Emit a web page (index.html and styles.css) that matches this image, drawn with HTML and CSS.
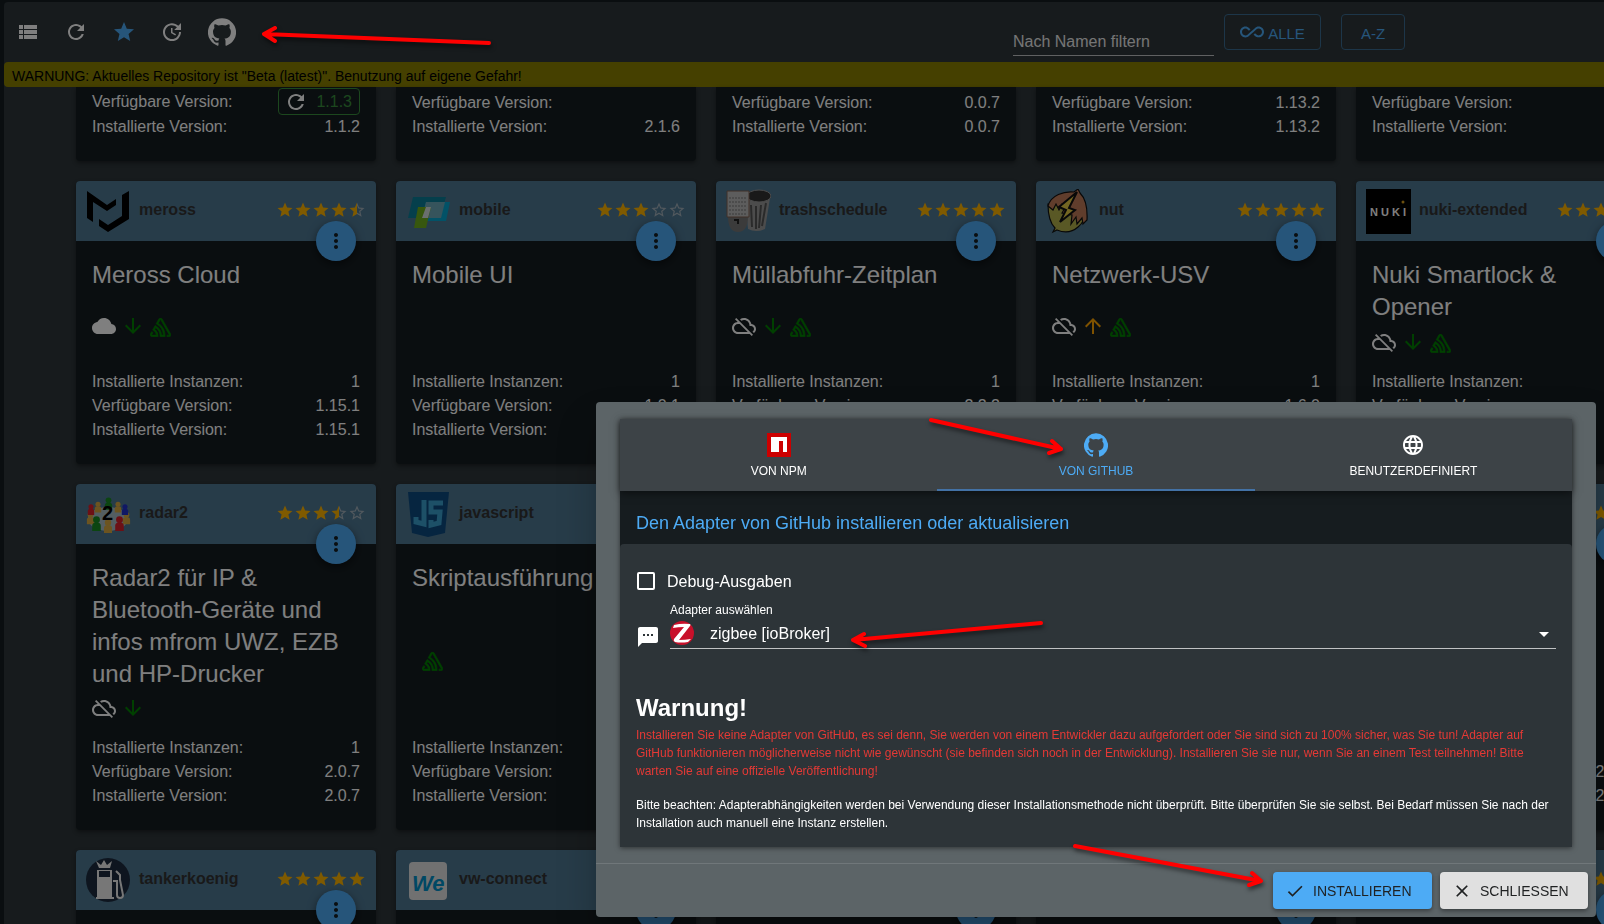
FILE: index.html
```html
<!DOCTYPE html>
<html lang="de">
<head>
    <meta charset="UTF-8">
    <meta name="viewport" content="width=device-width, initial-scale=1.0">
    <title>Adapter</title>
    <link rel="stylesheet" href="styles.css">
</head>
<body>
    <!-- Icon sprite -->
    <svg class="sprite" aria-hidden="true">
        <symbol id="list" viewBox="0 0 24 24"><path d="M3 14h4v-4H3v4zm0 5h4v-4H3v4zM3 9h4V5H3v4zm5 5h13v-4H8v4zm0 5h13v-4H8v4zM8 5v4h13V5H8z"/></symbol>
        <symbol id="refresh" viewBox="0 0 24 24"><path d="M17.65 6.35C16.2 4.9 14.21 4 12 4c-4.42 0-7.99 3.58-7.99 8s3.57 8 7.99 8c3.73 0 6.84-2.55 7.73-6h-2.08c-.82 2.33-3.04 4-5.65 4-3.31 0-6-2.69-6-6s2.69-6 6-6c1.66 0 3.14.69 4.22 1.78L13 11h7V4l-2.35 2.35z"/></symbol>
        <symbol id="star" viewBox="0 0 24 24"><path d="M12 17.27L18.18 21l-1.64-7.03L22 9.24l-7.19-.61L12 2 9.19 8.63 2 9.24l5.46 4.73L5.82 21z"/></symbol>
        <symbol id="star-half" viewBox="0 0 24 24"><path fill="#a3b1bb" d="M22 9.24l-7.19-.62L12 2v15.27L18.18 21l-1.63-7.03L22 9.24zM12 15.4V6.1l1.71 4.04 4.38.38-3.32 2.88 1 4.28L12 15.4z"/><path d="M12 2L9.19 8.63 2 9.24l5.46 4.73L5.82 21 12 17.27z"/></symbol>
        <symbol id="star-empty" viewBox="0 0 24 24"><path fill="#a3b1bb" d="M22 9.24l-7.19-.62L12 2 9.19 8.63 2 9.24l5.46 4.73L5.82 21 12 17.27 18.18 21l-1.63-7.03L22 9.24zM12 15.4l-3.76 2.27 1-4.28-3.32-2.88 4.38-.38L12 6.1l1.71 4.04 4.38.38-3.32 2.88 1 4.28L12 15.4z"/></symbol>
        <symbol id="update" viewBox="0 0 24 24"><path d="M21 10.12h-6.78l2.74-2.82c-2.73-2.7-7.15-2.8-9.88-.1-2.73 2.71-2.73 7.08 0 9.79s7.15 2.71 9.88 0C18.32 15.65 19 14.08 19 12.1h2c0 1.98-.88 4.55-2.64 6.29-3.51 3.48-9.21 3.48-12.72 0-3.5-3.47-3.53-9.11-.02-12.58s9.14-3.47 12.65 0L21 3v7.12zM12.5 8v4.25l3.5 2.08-.72 1.21L11 13V8h1.5z"/></symbol>
        <symbol id="github" viewBox="0 0 24 24"><path d="M12 .3a12 12 0 0 0-3.8 23.4c.6.1.8-.3.8-.6v-2c-3.3.7-4-1.6-4-1.6-.6-1.4-1.4-1.8-1.4-1.8-1-.7.1-.7.1-.7 1.2 0 1.9 1.2 1.9 1.2 1 1.8 2.8 1.3 3.5 1 0-.8.4-1.3.7-1.6-2.7-.3-5.5-1.3-5.5-6 0-1.2.5-2.3 1.3-3.1-.2-.4-.6-1.6 0-3.2 0 0 1-.3 3.4 1.2a11.5 11.5 0 0 1 6 0c2.3-1.5 3.3-1.2 3.3-1.2.6 1.6.2 2.8 0 3.2.9.8 1.3 1.9 1.3 3.2 0 4.6-2.8 5.6-5.5 5.9.5.4.9 1 .9 2.2v3.3c0 .3.1.7.8.6A12 12 0 0 0 12 .3"/></symbol>
        <symbol id="infinity" viewBox="0 0 24 24"><path d="M18.6 6.62c-1.44 0-2.8.56-3.77 1.53L12 10.66 10.48 12h.01L7.8 14.39c-.64.64-1.49.99-2.4.99-1.87 0-3.39-1.51-3.39-3.38S3.53 8.62 5.4 8.62c.91 0 1.76.35 2.44 1.03l1.13 1 1.51-1.34L9.22 8.2C8.2 7.18 6.84 6.62 5.4 6.62 2.42 6.62 0 9.04 0 12s2.42 5.38 5.4 5.38c1.44 0 2.8-.56 3.77-1.53l2.83-2.5.01.01L13.52 12h-.01l2.69-2.39c.64-.64 1.49-.99 2.4-.99 1.87 0 3.39 1.51 3.39 3.38s-1.52 3.38-3.39 3.38c-.9 0-1.76-.35-2.44-1.03l-1.14-1.01-1.51 1.34 1.27 1.12c1.02 1.01 2.37 1.57 3.82 1.57 2.98 0 5.4-2.41 5.4-5.38s-2.42-5.37-5.4-5.37z"/></symbol>
        <symbol id="more" viewBox="0 0 24 24"><path d="M12 8c1.1 0 2-.9 2-2s-.9-2-2-2-2 .9-2 2 .9 2 2 2zm0 2c-1.1 0-2 .9-2 2s.9 2 2 2 2-.9 2-2-.9-2-2-2zm0 6c-1.1 0-2 .9-2 2s.9 2 2 2 2-.9 2-2-.9-2-2-2z"/></symbol>
        <symbol id="cloud" viewBox="0 0 24 24"><path d="M19.35 10.04C18.67 6.59 15.64 4 12 4 9.11 4 6.6 5.64 5.35 8.04 2.34 8.36 0 10.91 0 14c0 3.31 2.69 6 6 6h13c2.76 0 5-2.24 5-5 0-2.64-2.05-4.78-4.65-4.96z"/></symbol>
        <symbol id="cloud-off" viewBox="0 0 24 24"><path d="M19.35 10.04C18.67 6.59 15.64 4 12 4c-1.48 0-2.85.43-4.01 1.17l1.46 1.46C10.21 6.23 11.08 6 12 6c3.04 0 5.5 2.46 5.5 5.5v.5H19c1.66 0 3 1.34 3 3 0 1.13-.64 2.11-1.56 2.62l1.45 1.45C23.16 18.16 24 16.68 24 15c0-2.64-2.05-4.78-4.65-4.96zM3 5.27l2.75 2.74C2.56 8.15 0 10.77 0 14c0 3.31 2.69 6 6 6h11.73l2 2L21 20.73 4.27 4 3 5.27zM7.73 10l8 8H6c-2.21 0-4-1.79-4-4s1.79-4 4-4h1.73z"/></symbol>
        <symbol id="down" viewBox="0 0 24 24"><path d="M20 12l-1.41-1.41L13 16.17V4h-2v12.17l-5.58-5.59L4 12l8 8 8-8z"/></symbol>
        <symbol id="up" viewBox="0 0 24 24"><path d="M4 12l1.41 1.41L11 7.83V20h2V7.83l5.58 5.59L20 12l-8-8-8 8z"/></symbol>
        <symbol id="sentry" viewBox="0 0 72 66"><path stroke="#008000" stroke-width="1.500" d="M29 2.26a4.67 4.67 0 0 0-8 0L14.42 13.53A32.21 32.21 0 0 1 32.17 40.19H27.55A27.68 27.68 0 0 0 12.09 17.47L6 28a15.92 15.92 0 0 1 9.23 12.17H4.62A.76.76 0 0 1 4 39.06l2.94-5a10.74 10.74 0 0 0-3.36-1.9l-2.91 5a4.54 4.54 0 0 0 1.69 6.24A4.66 4.66 0 0 0 4.62 44H19.15a19.4 19.4 0 0 0-8-17.31l2.31-4A23.87 23.87 0 0 1 23.76 44H36.07a35.88 35.88 0 0 0-16.41-31.8l4.67-8a.77.77 0 0 1 1.05-.27c.53.29 20.29 34.77 20.66 35.17a.76.76 0 0 1-.68 1.13H40.6q.09 1.91 0 3.81h4.78A4.59 4.59 0 0 0 50 39.43a4.49 4.49 0 0 0-.62-2.28Z" transform="scale(1.44 1.48)"/></symbol>
        <symbol id="globe" viewBox="0 0 24 24"><path d="M11.99 2C6.47 2 2 6.48 2 12s4.47 10 9.99 10C17.52 22 22 17.52 22 12S17.52 2 11.99 2zm6.93 6h-2.95c-.32-1.25-.78-2.45-1.38-3.56 1.84.63 3.37 1.91 4.33 3.56zM12 4.04c.83 1.2 1.48 2.53 1.91 3.96h-3.82c.43-1.43 1.08-2.76 1.91-3.96zM4.26 14C4.1 13.36 4 12.69 4 12s.1-1.36.26-2h3.38c-.08.66-.14 1.32-.14 2s.06 1.34.14 2H4.26zm.82 2h2.95c.32 1.25.78 2.45 1.38 3.56-1.84-.63-3.37-1.9-4.33-3.56zm2.95-8H5.08c.96-1.66 2.49-2.93 4.33-3.56C8.81 5.55 8.35 6.75 8.03 8zM12 19.96c-.83-1.2-1.48-2.53-1.91-3.96h3.82c-.43 1.43-1.08 2.76-1.91 3.96zM14.34 14H9.66c-.09-.66-.16-1.32-.16-2s.07-1.35.16-2h4.68c.09.65.16 1.32.16 2s-.07 1.34-.16 2zm.25 5.56c.6-1.11 1.06-2.31 1.38-3.56h2.95c-.96 1.65-2.49 2.93-4.33 3.56zM16.36 14c.08-.66.14-1.32.14-2s-.06-1.34-.14-2h3.38c.16.64.26 1.31.26 2s-.1 1.36-.26 2h-3.38z"/></symbol>
        <symbol id="sms" viewBox="0 0 24 24"><path d="M20 2H4c-1.1 0-1.99.9-1.99 2L2 22l4-4h14c1.1 0 2-.9 2-2V4c0-1.1-.9-2-2-2zM9 11H7V9h2v2zm4 0h-2V9h2v2zm4 0h-2V9h2v2z"/></symbol>
        <symbol id="check" viewBox="0 0 24 24"><path d="M9 16.17L4.83 12l-1.42 1.41L9 19 21 7l-1.41-1.41z"/></symbol>
        <symbol id="close" viewBox="0 0 24 24"><path d="M19 6.41L17.59 5 12 10.59 6.41 5 5 6.41 10.59 12 5 17.59 6.41 19 12 13.41 17.59 19 19 17.59 13.41 12z"/></symbol>
        <symbol id="rate50" viewBox="0 0 120 24"><use href="#star" width="24" height="24"/><use href="#star" x="24" width="24" height="24"/><use href="#star" x="48" width="24" height="24"/><use href="#star" x="72" width="24" height="24"/><use href="#star" x="96" width="24" height="24"/></symbol>
        <symbol id="rate45" viewBox="0 0 120 24"><use href="#star" width="24" height="24"/><use href="#star" x="24" width="24" height="24"/><use href="#star" x="48" width="24" height="24"/><use href="#star" x="72" width="24" height="24"/><use href="#star-half" x="96" width="24" height="24"/></symbol>
        <symbol id="rate35" viewBox="0 0 120 24"><use href="#star" width="24" height="24"/><use href="#star" x="24" width="24" height="24"/><use href="#star" x="48" width="24" height="24"/><use href="#star-half" x="72" width="24" height="24"/><use href="#star-empty" x="96" width="24" height="24"/></symbol>
        <symbol id="rate30" viewBox="0 0 120 24"><use href="#star" width="24" height="24"/><use href="#star" x="24" width="24" height="24"/><use href="#star" x="48" width="24" height="24"/><use href="#star-empty" x="72" width="24" height="24"/><use href="#star-empty" x="96" width="24" height="24"/></symbol>
        <symbol id="person" viewBox="0 0 10 14"><path d="M1 14V9q0-3 4-3t4 3v5z"/><circle cx="5" cy="3.500" r="3.200"/></symbol>
    </svg>

    <main class="panel">
        <header class="toolbar">
            <button class="icon-button" aria-label="Ansicht"><svg class="icon"><use href="#list"/></svg></button>
            <button class="icon-button" aria-label="Aktualisieren"><svg class="icon"><use href="#refresh"/></svg></button>
            <button class="icon-button active" aria-label="Favoriten"><svg class="icon"><use href="#star"/></svg></button>
            <button class="icon-button" aria-label="Updates"><svg class="icon"><use href="#update"/></svg></button>
            <button class="icon-button" aria-label="GitHub"><svg class="icon icon-large"><use href="#github"/></svg></button>
            <div class="filter">
                <input class="filter-input" type="text" placeholder="Nach Namen filtern" aria-label="Nach Namen filtern">
                <button class="outline-button"><svg class="icon"><use href="#infinity"/></svg>ALLE</button>
                <button class="outline-button sort-button">A-Z</button>
            </div>
        </header>
        <div class="banner">WARNUNG: Aktuelles Repository ist "Beta (latest)". Benutzung auf eigene Gefahr!</div>

        <div class="grid">
            <!-- Scrolled cards -->
            <div class="card card-end">
                <div class="row"><span>Verfügbare Version:</span><button class="update-button" aria-label="Update 1.1.3"><svg class="icon"><use href="#refresh"/></svg>1.1.3</button></div>
                <div class="row"><span>Installierte Version:</span><span>1.1.2</span></div>
            </div>
            <div class="card card-end">
                <div class="row"><span>Verfügbare Version:</span></div>
                <div class="row"><span>Installierte Version:</span><span>2.1.6</span></div>
            </div>
            <div class="card card-end">
                <div class="row"><span>Verfügbare Version:</span><span>0.0.7</span></div>
                <div class="row"><span>Installierte Version:</span><span>0.0.7</span></div>
            </div>
            <div class="card card-end">
                <div class="row"><span>Verfügbare Version:</span><span>1.13.2</span></div>
                <div class="row"><span>Installierte Version:</span><span>1.13.2</span></div>
            </div>
            <div class="card card-end">
                <div class="row"><span>Verfügbare Version:</span></div>
                <div class="row"><span>Installierte Version:</span></div>
            </div>

            <!-- First row -->
            <div class="card">
                <div class="card-header">
                    <svg class="logo" viewBox="0 0 45 45"><path d="M1 2l20 14 9-6v6L21 22 7 13v20l-6-4zM43 2v28L22 43l-9-6v-7l9 6 14-9V6z"/></svg>
                    <b class="name">meross</b><svg class="rating"><use href="#rate45"/></svg>
                    <button class="fab" aria-label="Menü"><svg class="icon"><use href="#more"/></svg></button>
                </div>
                <div class="card-body">
                    <div class="title">Meross Cloud</div>
                    <div class="icons"><svg class="icon"><use href="#cloud"/></svg><svg class="icon green"><use href="#down"/></svg><svg class="sentry"><use href="#sentry"/></svg></div>
                    <div class="rows">
                        <div class="row"><span>Installierte Instanzen:</span><span>1</span></div>
                        <div class="row"><span>Verfügbare Version:</span><span>1.15.1</span></div>
                        <div class="row"><span>Installierte Version:</span><span>1.15.1</span></div>
                    </div>
                </div>
            </div>
            <div class="card">
                <div class="card-header">
                    <svg class="logo" viewBox="0 0 45 45"><path fill="#0a7f98" d="M7 8h33l-6 21H2z"/><path fill="#05a5cf" d="M20 13h24l-4 19H15z"/><path fill="#6da8b8" d="M20 13h19l-4 16H16z"/><path fill="#6fae1c" d="M12 18h13l-5 21H8z"/><path fill="#d5dfdf" d="M20 18h5l-3 11h-6z"/></svg>
                    <b class="name">mobile</b><svg class="rating"><use href="#rate30"/></svg>
                    <button class="fab" aria-label="Menü"><svg class="icon"><use href="#more"/></svg></button>
                </div>
                <div class="card-body">
                    <div class="title">Mobile UI</div>
                    <div class="rows">
                        <div class="row"><span>Installierte Instanzen:</span><span>1</span></div>
                        <div class="row"><span>Verfügbare Version:</span><span>1.0.1</span></div>
                        <div class="row"><span>Installierte Version:</span><span>1.0.1</span></div>
                    </div>
                </div>
            </div>
            <div class="card">
                <div class="card-header">
                    <svg class="logo" viewBox="0 0 45 45"><path fill="#999" d="M19 6l25 3-5 31q-9 4-17 0z"/><path stroke="#555" stroke-width="2" d="M25 16l1 22M30 17v23M35 16l-2 23M40 14l-4 23"/><ellipse cx="33" cy="7" rx="12" ry="6" fill="#333" stroke="#999"/><path fill="#777" d="M2 27h20q0 16-10 16T2 27z"/><path fill="none" stroke="#222" stroke-width="2" d="M8 31h4v4"/><path fill="#bbb" stroke="#806050" d="M1 2h22v26H1z"/><path stroke="#777" stroke-dasharray="2 1" d="M3 9h18M3 13h18M3 17h18M3 21h18M3 25h18"/></svg>
                    <b class="name">trashschedule</b><svg class="rating"><use href="#rate50"/></svg>
                    <button class="fab" aria-label="Menü"><svg class="icon"><use href="#more"/></svg></button>
                </div>
                <div class="card-body">
                    <div class="title">Müllabfuhr-Zeitplan</div>
                    <div class="icons"><svg class="icon"><use href="#cloud-off"/></svg><svg class="icon green"><use href="#down"/></svg><svg class="sentry"><use href="#sentry"/></svg></div>
                    <div class="rows">
                        <div class="row"><span>Installierte Instanzen:</span><span>1</span></div>
                        <div class="row"><span>Verfügbare Version:</span><span>2.2.2</span></div>
                        <div class="row"><span>Installierte Version:</span><span>2.2.2</span></div>
                    </div>
                </div>
            </div>
            <div class="card">
                <div class="card-header">
                    <svg class="logo" viewBox="0 0 45 45"><g stroke="#111" stroke-width="1.200"><path fill="#b3b04a" d="M2 15q0 17 7 24l-2 4 4-2q12 5 21-3 7-6 8-14l-12-12z"/><path fill="#c07a58" d="M2 17C5 6 18 2 28 3l4-3 2 4q8 8 7 27l-4 4-1-6-5 6-1-7-5 7 1-9-10-2 4-7-4-2-3 6-3-6-3 6z"/><path fill="#e6cc45" stroke-width="2" d="M31 3L13 18l7 3-6 12 15-12-6-2z"/></g></svg>
                    <b class="name">nut</b><svg class="rating"><use href="#rate50"/></svg>
                    <button class="fab" aria-label="Menü"><svg class="icon"><use href="#more"/></svg></button>
                </div>
                <div class="card-body">
                    <div class="title">Netzwerk-USV</div>
                    <div class="icons"><svg class="icon"><use href="#cloud-off"/></svg><svg class="icon orange"><use href="#up"/></svg><svg class="sentry"><use href="#sentry"/></svg></div>
                    <div class="rows">
                        <div class="row"><span>Installierte Instanzen:</span><span>1</span></div>
                        <div class="row"><span>Verfügbare Version:</span><span>1.6.0</span></div>
                        <div class="row"><span>Installierte Version:</span><span>1.6.0</span></div>
                    </div>
                </div>
            </div>
            <div class="card">
                <div class="card-header">
                    <svg class="logo" viewBox="0 0 45 45"><path d="M0 0h45v45H0z"/><text class="nuki-text" x="4" y="27">N U K I</text><circle cx="37" cy="13" r="1.500" fill="#d8a020"/></svg>
                    <b class="name">nuki-extended</b><svg class="rating"><use href="#rate50"/></svg>
                    <button class="fab" aria-label="Menü"><svg class="icon"><use href="#more"/></svg></button>
                </div>
                <div class="card-body">
                    <div class="title">Nuki Smartlock &amp; Opener</div>
                    <div class="icons"><svg class="icon"><use href="#cloud-off"/></svg><svg class="icon green"><use href="#down"/></svg><svg class="sentry"><use href="#sentry"/></svg></div>
                    <div class="rows">
                        <div class="row"><span>Installierte Instanzen:</span></div>
                        <div class="row"><span>Verfügbare Version:</span></div>
                        <div class="row"><span>Installierte Version:</span></div>
                    </div>
                </div>
            </div>

            <!-- Second row -->
            <div class="card">
                <div class="card-header">
                    <svg class="logo" viewBox="0 0 45 45"><ellipse cx="22" cy="27" rx="20" ry="12" fill="#a9bcc4"/><g fill="#d8a840"><use href="#person" x="8" y="9" width="8" height="12"/><use href="#person" x="28" y="9" width="8" height="12"/><use href="#person" x="0" y="19" width="9" height="14"/><use href="#person" x="36" y="19" width="9" height="14"/><use href="#person" x="17" y="27" width="10" height="14"/></g><g fill="#d8202a"><use href="#person" x="1" y="11" width="8" height="13"/><use href="#person" x="28" y="24" width="11" height="15"/></g><g fill="#188a22"><use href="#person" x="18" y="5" width="9" height="13"/><use href="#person" x="5" y="24" width="11" height="15"/></g><use href="#person" x="35" y="11" width="8" height="13" fill="#2030c8"/><text class="radar-text" x="16" y="28">2</text></svg>
                    <b class="name">radar2</b><svg class="rating"><use href="#rate35"/></svg>
                    <button class="fab" aria-label="Menü"><svg class="icon"><use href="#more"/></svg></button>
                </div>
                <div class="card-body">
                    <div class="title">Radar2 für IP &amp; Bluetooth-Geräte und infos mfrom UWZ, EZB und HP-Drucker</div>
                    <div class="icons"><svg class="icon"><use href="#cloud-off"/></svg><svg class="icon green"><use href="#down"/></svg></div>
                    <div class="rows">
                        <div class="row"><span>Installierte Instanzen:</span><span>1</span></div>
                        <div class="row"><span>Verfügbare Version:</span><span>2.0.7</span></div>
                        <div class="row"><span>Installierte Version:</span><span>2.0.7</span></div>
                    </div>
                </div>
            </div>
            <div class="card">
                <div class="card-header">
                    <svg class="logo" viewBox="0 0 45 45"><path fill="#0c4a80" d="M2 0h41l-4 41-17 4-16-4z"/><path fill="none" stroke="#3aa0ce" stroke-width="5" d="M18 8v24l-8-2v-5M37 11H25v9h9l-1 11-8 2v-5"/></svg>
                    <b class="name">javascript</b><svg class="rating"><use href="#rate50"/></svg>
                    <button class="fab" aria-label="Menü"><svg class="icon"><use href="#more"/></svg></button>
                </div>
                <div class="card-body">
                    <div class="title">Skriptausführung</div>
                    <div class="icons icons-inset"><svg class="sentry"><use href="#sentry"/></svg></div>
                    <div class="rows">
                        <div class="row"><span>Installierte Instanzen:</span></div>
                        <div class="row"><span>Verfügbare Version:</span></div>
                        <div class="row"><span>Installierte Version:</span></div>
                    </div>
                </div>
            </div>
            <div class="card"><div class="card-header"></div></div>
            <div class="card"><div class="card-header"></div></div>
            <div class="card">
                <div class="card-header">
                    <svg class="rating"><use href="#rate50"/></svg>
                    <button class="fab" aria-label="Menü"><svg class="icon"><use href="#more"/></svg></button>
                </div>
                <div class="card-body">
                    <div class="rows rows-last">
                        <div class="row"><span></span><span>2.10.1</span></div>
                        <div class="row"><span></span><span>2.10.1</span></div>
                    </div>
                </div>
            </div>

            <!-- Third row -->
            <div class="card">
                <div class="card-header">
                    <svg class="logo" viewBox="0 0 45 45"><circle cx="22" cy="22" r="22" fill="#1c2b3e"/><g fill="#eee"><path d="M13 10l-3-7 5 4 3-5 3 5 5-4-2 7zM11 12h15v27h2v2H10v-2h1z"/></g><path fill="#1c2b3e" d="M13 13h11v6H13z"/><path fill="none" stroke="#eee" stroke-width="2" d="M27 23h4v14q0 3 3 3t3-3l-3-15V17l-4-4"/></svg>
                    <b class="name">tankerkoenig</b><svg class="rating"><use href="#rate50"/></svg>
                    <button class="fab" aria-label="Menü"><svg class="icon"><use href="#more"/></svg></button>
                </div>
                <div class="card-body"></div>
            </div>
            <div class="card">
                <div class="card-header">
                    <svg class="logo" viewBox="0 0 45 45"><rect x="3" y="4" width="38" height="38" rx="4" fill="#e2e2e2"/><text class="we-text" x="6" y="33">We</text></svg>
                    <b class="name">vw-connect</b>
                    <button class="fab" aria-label="Menü"><svg class="icon"><use href="#more"/></svg></button>
                </div>
                <div class="card-body"></div>
            </div>
            <div class="card"><div class="card-header"><button class="fab" aria-label="Menü"><svg class="icon"><use href="#more"/></svg></button></div><div class="card-body"></div></div>
            <div class="card"><div class="card-header"><button class="fab" aria-label="Menü"><svg class="icon"><use href="#more"/></svg></button></div><div class="card-body"></div></div>
            <div class="card">
                <div class="card-header">
                    <svg class="rating"><use href="#rate50"/></svg>
                    <button class="fab" aria-label="Menü"><svg class="icon"><use href="#more"/></svg></button>
                </div>
                <div class="card-body"></div>
            </div>
        </div>
    </main>

    <div class="backdrop"></div>

    <div class="dialog" role="dialog" aria-modal="true">
        <div class="dialog-content">
            <div class="tabs" role="tablist">
                <button class="tab" role="tab"><svg class="icon" viewBox="0 0 24 24"><path fill="#c00" d="M0 0h24v24H0z"/><path fill="#fff" d="M4 4h16v15h-4V8h-4v11H4z"/></svg>VON NPM</button>
                <button class="tab tab-active" role="tab"><svg class="icon"><use href="#github"/></svg>VON GITHUB</button>
                <button class="tab" role="tab"><svg class="icon"><use href="#globe"/></svg>BENUTZERDEFINIERT</button>
            </div>
            <div class="headline">Den Adapter von GitHub installieren oder aktualisieren</div>
            <div class="form">
                <label class="check-label"><input class="checkbox" type="checkbox">Debug-Ausgaben</label>
                <div class="field">
                    <svg class="icon field-icon"><use href="#sms"/></svg>
                    <div class="select-box">
                        <label class="select-label" for="adapter">Adapter auswählen</label>
                        <select class="select" id="adapter"><option>zigbee [ioBroker]</option></select>
                        <svg class="adapter-logo" viewBox="0 0 24 24"><circle cx="12" cy="12" r="12" fill="#c8102a"/><path fill="#fff" d="M4 4q8-2 16-1 1 1 0 2L9 19q6 0 12-1l-3 3q-7 1-13 0-2-1-1-3L14 6q-6 0-11 1z"/></svg>
                        <svg class="caret" viewBox="0 0 10 5"><path d="M0 0l5 5 5-5z"/></svg>
                    </div>
                </div>
                <h2 class="warning-title">Warnung!</h2>
                <p class="warning-text">Installieren Sie keine Adapter von GitHub, es sei denn, Sie werden von einem Entwickler dazu aufgefordert oder Sie sind sich zu 100% sicher, was Sie tun! Adapter auf GitHub funktionieren möglicherweise nicht wie gewünscht (sie befinden sich noch in der Entwicklung). Installieren Sie sie nur, wenn Sie an einem Test teilnehmen! Bitte warten Sie auf eine offizielle Veröffentlichung!</p>
                <p class="note">Bitte beachten: Adapterabhängigkeiten werden bei Verwendung dieser Installationsmethode nicht überprüft. Bitte überprüfen Sie sie selbst. Bei Bedarf müssen Sie nach der Installation auch manuell eine Instanz erstellen.</p>
            </div>
        </div>
        <div class="actions">
            <button class="button button-primary"><svg class="icon"><use href="#check"/></svg>INSTALLIEREN</button>
            <button class="button"><svg class="icon"><use href="#close"/></svg>SCHLIESSEN</button>
        </div>
    </div>

    <!-- Hint arrows -->
    <svg class="arrows" aria-hidden="true">
        <path d="M489 43L264 34M275 28L264 34L275 41"/>
        <path d="M931 420L1061 449M1052 441L1061 449L1049 453"/>
        <path d="M1041 623L853 640M864 634L853 640L865 646"/>
        <path d="M1075 846L1261 881M1252 873L1261 881L1249 885"/>
    </svg>
</body>
</html>
```

FILE: styles.css
```css
* {
    box-sizing: border-box;
}

body {
    margin: 0;
    height: 100vh;
    overflow: hidden;
    padding: 2px 0 0 4px;
    background: #151d21;
    color: #ffffff;
    font-family: "Liberation Sans", Arial, sans-serif;
    font-size: 16px;
    line-height: 24px;
}

button, input, select {
    font-family: inherit;
    color: inherit;
}

button {
    border: none;
    cursor: pointer;
}

.sprite {
    display: none;
}

.icon {
    width: 24px;
    height: 24px;
    fill: currentColor;
    flex-shrink: 0;
}

.icon-large {
    width: 28px;
    height: 28px;
}

.panel {
    height: 100%;
    overflow: hidden;
    background: #2e363a;
    border-radius: 4px 0 0 0;
}

/* Toolbar */
.toolbar {
    display: flex;
    align-items: center;
    height: 60px;
}

.icon-button {
    display: flex;
    padding: 12px;
    background: none;
}

.active {
    color: #4dabf5;
}

.filter {
    display: flex;
    align-items: center;
    margin-left: auto;
    margin-right: 199px;
}

.filter-input {
    width: 201px;
    height: 30px;
    margin: 18px 10px 0 0;
    padding: 2px 0 0;
    background: none;
    border: none;
    border-bottom: 1px solid #c0c3c4;
    font-size: 16px;
}

.filter-input::placeholder {
    color: #ffffff;
    opacity: 0.9;
}

.outline-button {
    display: flex;
    align-items: center;
    justify-content: center;
    gap: 4px;
    height: 36px;
    min-width: 97px;
    padding: 2px 6px 0;
    background: none;
    border: 1px solid #3a6d92;
    border-radius: 4px;
    color: #4dabf5;
    font-size: 15px;
}

.outline-button .icon {
    margin-bottom: 2px;
}

.sort-button {
    min-width: 64px;
    margin-left: 20px;
}

.banner {
    height: 25px;
    padding-left: 8px;
    line-height: 28px;
    font-size: 14px;
    background: #8a8000;
    border-radius: 4px 0 0 4px;
    color: #000000;
}

/* Cards */
.grid {
    display: grid;
    grid-template-columns: repeat(5, 300px);
    gap: 20px;
    padding-left: 72px;
}

.card {
    display: flex;
    flex-direction: column;
    background: #151d21;
    border-radius: 4px;
    box-shadow: 0 2px 4px rgba(0, 0, 0, 0.4);
}

.card-end {
    justify-content: flex-end;
    min-height: 74px;
    padding: 0 16px 22px;
    border-radius: 0 0 4px 4px;
}

.card-header {
    position: relative;
    display: flex;
    align-items: center;
    height: 60px;
    padding: 0 10px;
    background: #4e7893;
    border-radius: 4px 4px 0 0;
}

.logo {
    width: 45px;
    height: 45px;
}

.name {
    margin-left: 8px;
    padding-bottom: 3px;
    color: #333333;
}

.rating {
    width: 90px;
    height: 18px;
    margin: 0 0 2px auto;
    fill: #ffb400;
}

.fab {
    position: absolute;
    right: 20px;
    bottom: -20px;
    width: 40px;
    height: 40px;
    padding: 8px;
    border-radius: 50%;
    background: #4dabf5;
    color: #151d21;
    box-shadow: 0 3px 8px rgba(0, 0, 0, 0.5);
}

.card-body {
    flex: 1;
    display: flex;
    flex-direction: column;
    justify-content: space-between;
    min-height: 223px;
    padding: 18px 16px 22px;
}

.title {
    font-size: 24px;
    line-height: 32px;
}

.icons {
    display: flex;
    gap: 5px;
    height: 46px;
    padding-top: 6px;
}

.icons-inset {
    padding-left: 10px;
}

.green {
    color: #008000;
}

.orange {
    color: #ffa500;
}

.sentry {
    width: 21px;
    height: 19px;
    margin-top: 4px;
    fill: #008000;
}

.row {
    display: flex;
    align-items: center;
    justify-content: space-between;
}

.rows-last {
    margin-top: auto;
}

.update-button {
    display: flex;
    align-items: center;
    gap: 8px;
    height: 27px;
    padding: 0 7px 0 5px;
    background: none;
    border: 1px solid #388e3c;
    border-radius: 4px;
    color: #388e3c;
    font-size: 16px;
}

.update-button .icon {
    color: #ffffff;
}

.nuki-text {
    fill: #ffffff;
    font-size: 11px;
    font-weight: bold;
}

.radar-text {
    font-size: 20px;
    font-weight: bold;
}

.we-text {
    fill: #0090c8;
    font-size: 22px;
    font-weight: bold;
    font-style: italic;
}

/* Dialog */
.backdrop {
    position: fixed;
    inset: 0;
    background: rgba(0, 0, 0, 0.5);
}

.dialog {
    position: fixed;
    right: 8px;
    bottom: 7px;
    width: 1000px;
    max-width: 100%;
    background: #5c6467;
    border-radius: 4px;
    box-shadow: 0 11px 15px -7px rgba(0, 0, 0, 0.2), 0 24px 38px 3px rgba(0, 0, 0, 0.2);
}

.dialog-content {
    margin: 17px 24px 16px;
    background: #161c1f;
    box-shadow: 0 1px 5px rgba(0, 0, 0, 0.5);
}

.tabs {
    display: flex;
    background: #3d4347;
    box-shadow: 0 2px 8px rgba(0, 0, 0, 0.5);
}

.tab {
    flex: 1;
    display: flex;
    flex-direction: column;
    align-items: center;
    gap: 7px;
    height: 72px;
    padding-top: 14px;
    background: none;
    font-size: 12px;
}

.tab-active {
    color: #4dabf5;
    border-bottom: 2px solid #4372a6;
}

.headline {
    padding: 20px 16px 9px;
    color: #4dabf5;
    font-size: 18px;
}

.form {
    padding: 26px 16px 15px;
    background: #2d3438;
    border-radius: 4px 4px 0 0;
}

.check-label {
    display: flex;
    align-items: center;
    gap: 12px;
}

.checkbox {
    appearance: none;
    width: 18px;
    height: 18px;
    margin: 0 0 2px 1px;
    border: 2px solid #ffffff;
    border-radius: 2px;
}

.field {
    display: flex;
    align-items: flex-end;
    gap: 10px;
    margin-top: 8px;
}

.select-box {
    position: relative;
    flex: 1;
}

.select-label {
    display: block;
    font-size: 12px;
    line-height: 16px;
}

.select {
    display: block;
    width: 100%;
    height: 31px;
    padding: 0 0 0 40px;
    appearance: none;
    background: none;
    border: none;
    border-bottom: 1px solid #c0c2c3;
    font-size: 16px;
}

.adapter-logo {
    position: absolute;
    left: 0;
    bottom: 4px;
    width: 24px;
    height: 24px;
}

.caret {
    position: absolute;
    right: 7px;
    bottom: 12px;
    width: 10px;
    height: 5px;
    fill: #ffffff;
}

.warning-title {
    margin: 43px 0 2px;
    font-size: 24px;
    line-height: 32px;
}

.warning-text, .note {
    margin: 0;
    font-size: 12px;
    line-height: 18px;
}

.warning-text {
    color: #e53935;
}

.note {
    margin-top: 16px;
}

.actions {
    display: flex;
    justify-content: flex-end;
    gap: 8px;
    padding: 8px;
    border-top: 1px solid #70777a;
}

.button {
    display: flex;
    align-items: center;
    gap: 8px;
    height: 37px;
    min-width: 148px;
    padding: 0 16px 0 12px;
    background: #e0e0e0;
    border-radius: 4px;
    box-shadow: 0 2px 4px rgba(0, 0, 0, 0.4);
    color: #1f2122;
    font-size: 14px;
}

.button-primary {
    min-width: 159px;
    background: #4dabf5;
}

.button .icon {
    width: 20px;
    height: 20px;
}

/* Arrows */
.arrows {
    position: fixed;
    top: 0;
    left: 0;
    width: 100%;
    height: 100%;
    pointer-events: none;
    fill: none;
    stroke: #ff0000;
    stroke-width: 4px;
    stroke-linecap: round;
    stroke-linejoin: round;
    filter: drop-shadow(1px 3px 2px rgba(0, 0, 0, 0.5));
}
```
